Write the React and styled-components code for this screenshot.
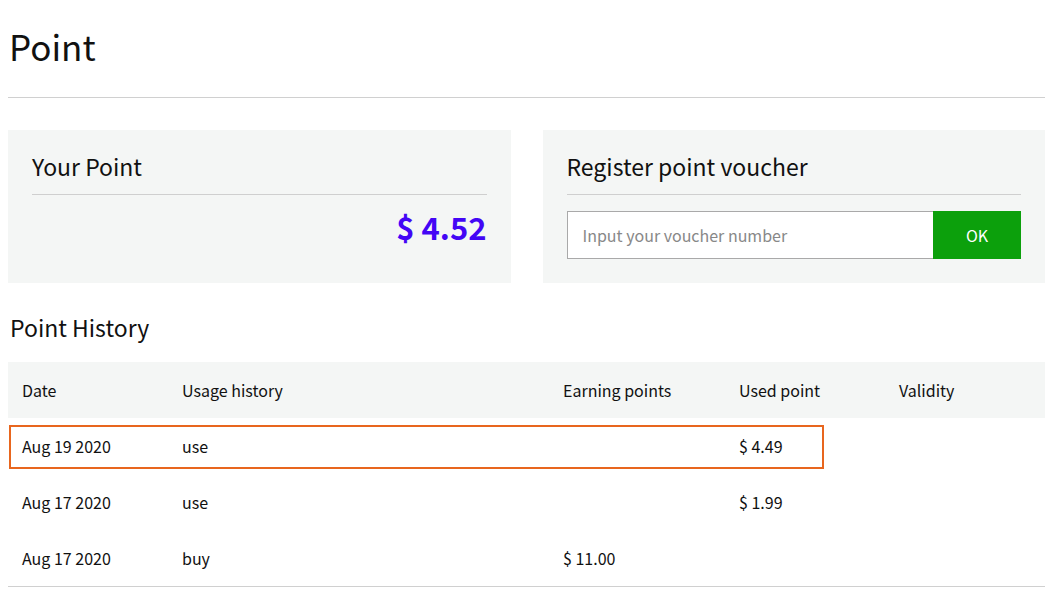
import React from 'react'
import styled, { createGlobalStyle } from 'styled-components'

const GlobalStyle = createGlobalStyle`
    body {
        margin: 8px;
        background: #fff;
        color: #111;
        font-family: "Noto Sans CJK KR", "Noto Sans", sans-serif;
    }
    * { box-sizing: border-box; }
`

const Page = styled.div`
    width: 1037px;
`

const Title = styled.h1`
    margin: 0;
    padding: 16px 0 29px 1px;
    font-size: 35px;
    font-weight: 400;
    line-height: 44px;
    border-bottom: 1px solid #d0d0d0;
`

const Cards = styled.div`
    display: grid;
    grid-template-columns: 1fr 1fr;
    gap: 32px;
    margin-top: 32px;
`

const Card = styled.section`
    background: #f4f6f5;
    padding: 20px 24px 24px;
    height: 153px;
`

const CardTitle = styled.h2`
    margin: 0;
    padding-bottom: 12px;
    font-size: 23px;
    font-weight: 400;
    line-height: 32px;
    border-bottom: 1px solid #cfcfcf;
`

const Amount = styled.div`
    margin-top: 14px;
    text-align: right;
    color: #4306f5;
    font-size: 31px;
    font-weight: 700;
    line-height: 36px;
`

const VoucherForm = styled.form`
    display: flex;
    margin-top: 16px;
    height: 48px;
`

const VoucherInput = styled.input`
    flex: 1;
    min-width: 0;
    border: 1px solid #a9a9a9;
    border-right: none;
    background: #fff;
    padding: 0 15px;
    font-family: inherit;
    font-size: 16px;
    color: #333;
    &::placeholder { color: #888; }
`

const OkButton = styled.button`
    width: 88px;
    border: none;
    background: #0ca00c;
    color: #fff;
    font-family: inherit;
    font-size: 16px;
`

const SectionTitle = styled.h2`
    margin: 26px 0 0 2px;
    font-size: 23px;
    font-weight: 400;
    line-height: 36px;
`

const Table = styled.table`
    width: 100%;
    margin-top: 17px;
    border-collapse: collapse;
    table-layout: fixed;
    font-size: 16px;
    border-bottom: 1px solid #d0d0d0;
`

const HeadRow = styled.tr`
    background: #f4f6f5;
`

const Th = styled.th`
    width: ${p => p.$w}px;
    height: 56px;
    padding: 0 0 0 14px;
    text-align: left;
    font-weight: 400;
`

const Row = styled.tr`
    position: relative;
`

const Td = styled.td`
    height: 56px;
    padding: 0 0 0 14px;
    position: relative;
`

const Highlight = styled.span`
    position: absolute;
    left: 1px;
    top: 7px;
    width: 815px;
    height: 44px;
    border: 2px solid #e8661e;
    pointer-events: none;
`

const COLUMNS = [
    { label: 'Date', w: 160 },
    { label: 'Usage history', w: 381 },
    { label: 'Earning points', w: 176 },
    { label: 'Used point', w: 160 },
    { label: 'Validity' },
]

const HISTORY = [
    { date: 'Aug 19 2020', usage: 'use', earned: '', used: '$ 4.49', validity: '', selected: true },
    { date: 'Aug 17 2020', usage: 'use', earned: '', used: '$ 1.99', validity: '' },
    { date: 'Aug 17 2020', usage: 'buy', earned: '$ 11.00', used: '', validity: '' },
]

export default function App() {
    return (
        <Page>
            <GlobalStyle />
            <Title>Point</Title>
            <Cards>
                <Card>
                    <CardTitle>Your Point</CardTitle>
                    <Amount>$ 4.52</Amount>
                </Card>
                <Card>
                    <CardTitle>Register point voucher</CardTitle>
                    <VoucherForm onSubmit={e => e.preventDefault()}>
                        <VoucherInput placeholder="Input your voucher number" />
                        <OkButton type="submit">OK</OkButton>
                    </VoucherForm>
                </Card>
            </Cards>
            <SectionTitle>Point History</SectionTitle>
            <Table>
                <thead>
                    <HeadRow>
                        {COLUMNS.map(col => (
                            <Th key={col.label} $w={col.w}>{col.label}</Th>
                        ))}
                    </HeadRow>
                </thead>
                <tbody>
                    {HISTORY.map((item, i) => (
                        <Row key={i}>
                            <Td>
                                {item.selected && <Highlight />}
                                {item.date}
                            </Td>
                            <Td>{item.usage}</Td>
                            <Td>{item.earned}</Td>
                            <Td>{item.used}</Td>
                            <Td>{item.validity}</Td>
                        </Row>
                    ))}
                </tbody>
            </Table>
        </Page>
    )
}
